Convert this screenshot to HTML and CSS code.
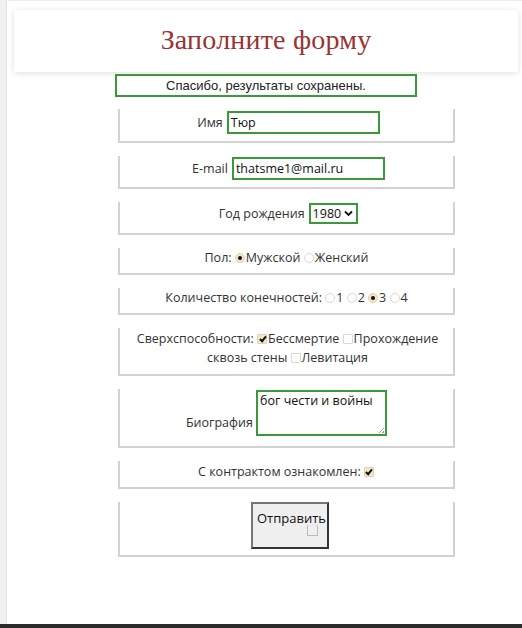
FILE: index.html
```html
<!DOCTYPE html>
<html lang="ru">
<head>
<meta charset="utf-8">
<title>Форма</title>
<link rel="stylesheet" href="styles.css">
</head>
<body>
<div class="page">
  <header class="card">
    <h1 class="title">Заполните форму</h1>
  </header>
  <div class="notice">Спасибо, результаты сохранены.</div>
  <form class="form">
    <div class="row row-name">
      <label>Имя <input class="field field-name" type="text" value="Тюр"></label>
    </div>
    <div class="row row-mail">
      <label>E-mail <input class="field field-mail" type="text" value="thatsme1@mail.ru"></label>
    </div>
    <div class="row row-year">
      <label>Год рождения <span class="select">1980 <svg class="chev" width="9" height="7" viewBox="0 0 9 7"><path d="M1 1.5 L4.5 5 L8 1.5" fill="none" stroke="#111" stroke-width="1.8"/></svg></span></label>
    </div>
    <div class="row row-sex">
      Пол: <span class="radio on"></span>Мужской <span class="radio"></span>Женский
    </div>
    <div class="row row-limbs">
      Количество конечностей: <span class="radio"></span>1 <span class="radio"></span>2 <span class="radio on"></span>3 <span class="radio"></span>4
    </div>
    <div class="row row-multi">
      Сверхспособности: <span class="opt"><span class="check on"></span>Бессмертие</span> <span class="opt"><span class="check"></span>Прохождение</span> сквозь стены <span class="opt"><span class="check"></span>Левитация</span>
    </div>
    <div class="row row-bio">
      Биография <span class="area">бог чести и войны<span class="grip"></span></span>
    </div>
    <div class="row row-contract">
      С контрактом ознакомлен: <span class="check on"></span>
    </div>
    <div class="row row-btn">
      <span class="button">Отправить<span class="box"></span></span>
    </div>
  </form>
</div>
</body>
</html>
```

FILE: styles.css
```css
html, body {
  margin: 0;
  padding: 0;
  background: #ffffff;
}
body {
  height: 628px;
  overflow: hidden;
  font-family: "Open Sans", "Noto Sans", sans-serif;
}
.page {
  box-sizing: border-box;
  height: 624px;
  border-left: 6px solid #f1f1f1;
  border-top: 1px solid #ececec;
  padding: 9px 4px 0 8px;
  box-shadow: inset 1px 0 0 #e4e4e4;
}
body::after {
  content: "";
  display: block;
  height: 4px;
  background: #2a2a2a;
}
.card {
  height: 62px;
  background: #fff;
  box-shadow: 0 1px 6px rgba(0,0,0,0.13);
  display: flex;
  align-items: center;
  justify-content: center;
}
.title {
  margin: 0 0 2px;
  font-family: "Liberation Serif", "DejaVu Serif", serif;
  font-weight: normal;
  font-size: 28px;
  color: #993434;
  letter-spacing: 0.2px;
}
.notice {
  box-sizing: border-box;
  width: 302px;
  height: 23px;
  margin: 2px 0 0 101px;
  border: 2px solid #3a9a3a;
  font-family: "Liberation Sans", Arial, sans-serif;
  font-size: 13px;
  line-height: 19px;
  text-align: center;
  color: #222;
}
.form {
  margin: 12px 0 0 104px;
  width: 337px;
}
.row {
  box-sizing: border-box;
  border: 2px solid #d2d2d2;
  border-top: none;
  padding: 0 8px;
  margin-bottom: 13px;
  text-align: center;
  font-size: 12.5px;
  line-height: 20px;
  color: #333;
  overflow: hidden;
}
.row-name { height: 34px; padding-top: 2px; }
.row-mail { height: 33px; padding-top: 1px; }
.row-year { height: 33px; padding-top: 1px; }
.row-sex { height: 27px; padding-top: 0; }
.row-limbs { height: 27px; padding-top: 0; }
.row-multi { height: 48px; padding: 1px 10px 0 12px; line-height: 19px; }
.row-bio { height: 59px; padding-top: 1px; line-height: 66px; }
.row-contract { height: 28px; padding-top: 1px; }
.row-btn { height: 55px; padding-top: 0; }

.opt {
  white-space: nowrap;
}
.row-name label, .row-mail label, .row-year label {
  display: inline-flex;
  align-items: center;
  gap: 4px;
  margin-left: 4px;
}
.field {
  box-sizing: border-box;
  height: 23px;
  width: 153px;
  border: 2px solid #3a9a3a;
  padding: 0 2px;
  margin: 0;
  font-family: "Open Sans", "Noto Sans", sans-serif;
  font-size: 12.5px;
  color: #111;
}
.select {
  display: inline-flex;
  align-items: center;
  gap: 3px;
  box-sizing: border-box;
  height: 21px;
  border: 2px solid #3a9a3a;
  padding: 0 3px 0 2px;
  line-height: 17px;
  color: #111;
}
.radio, .check {
  display: inline-block;
  box-sizing: border-box;
  width: 10px;
  height: 10px;
  border: 1px solid #d8d8d8;
  background: #fff;
  vertical-align: -1px;
  position: relative;
  margin-right: 1px;
}
.radio {
  border-radius: 50%;
}
.radio.on {
  background: #f1e6c8;
  border-color: #e0d3ae;
}
.radio.on::after {
  content: "";
  position: absolute;
  left: 2px;
  top: 2px;
  width: 4px;
  height: 4px;
  border-radius: 50%;
  background: #111;
}
.check {
  border-radius: 1px;
}
.check.on {
  background: #f1e6c8;
  border-color: #e0d3ae;
}
.check.on::after {
  content: "";
  position: absolute;
  left: 2.5px;
  top: 0px;
  width: 2px;
  height: 5px;
  border: solid #111;
  border-width: 0 2px 2px 0;
  transform: rotate(40deg);
}
.area {
  display: inline-block;
  box-sizing: border-box;
  width: 131px;
  height: 46px;
  border: 2px solid #3a9a3a;
  text-align: left;
  padding: 0 2px;
  line-height: 18px;
  color: #111;
  vertical-align: top;
  position: relative;
}
.grip {
  position: absolute;
  right: 1px;
  bottom: 1px;
  width: 5px;
  height: 5px;
  background: linear-gradient(135deg, transparent 45%, #999 45%, #999 58%, transparent 58%, transparent 72%, #999 72%);
}
.button {
  display: inline-block;
  box-sizing: border-box;
  width: 78px;
  height: 47px;
  margin-left: 6px;
  border: 2px solid;
  border-color: #767676 #333 #333 #767676;
  background: #efefef;
  color: #111;
  font-size: 13px;
  line-height: 18px;
  padding: 5px 0 0 4px;
  position: relative;
  vertical-align: top;
  white-space: nowrap;
}
.box {
  position: absolute;
  left: 54px;
  top: 21px;
  width: 9px;
  height: 9px;
  border: 1px solid #bbb;
  border-top-color: #e8e8e8;
}
```
